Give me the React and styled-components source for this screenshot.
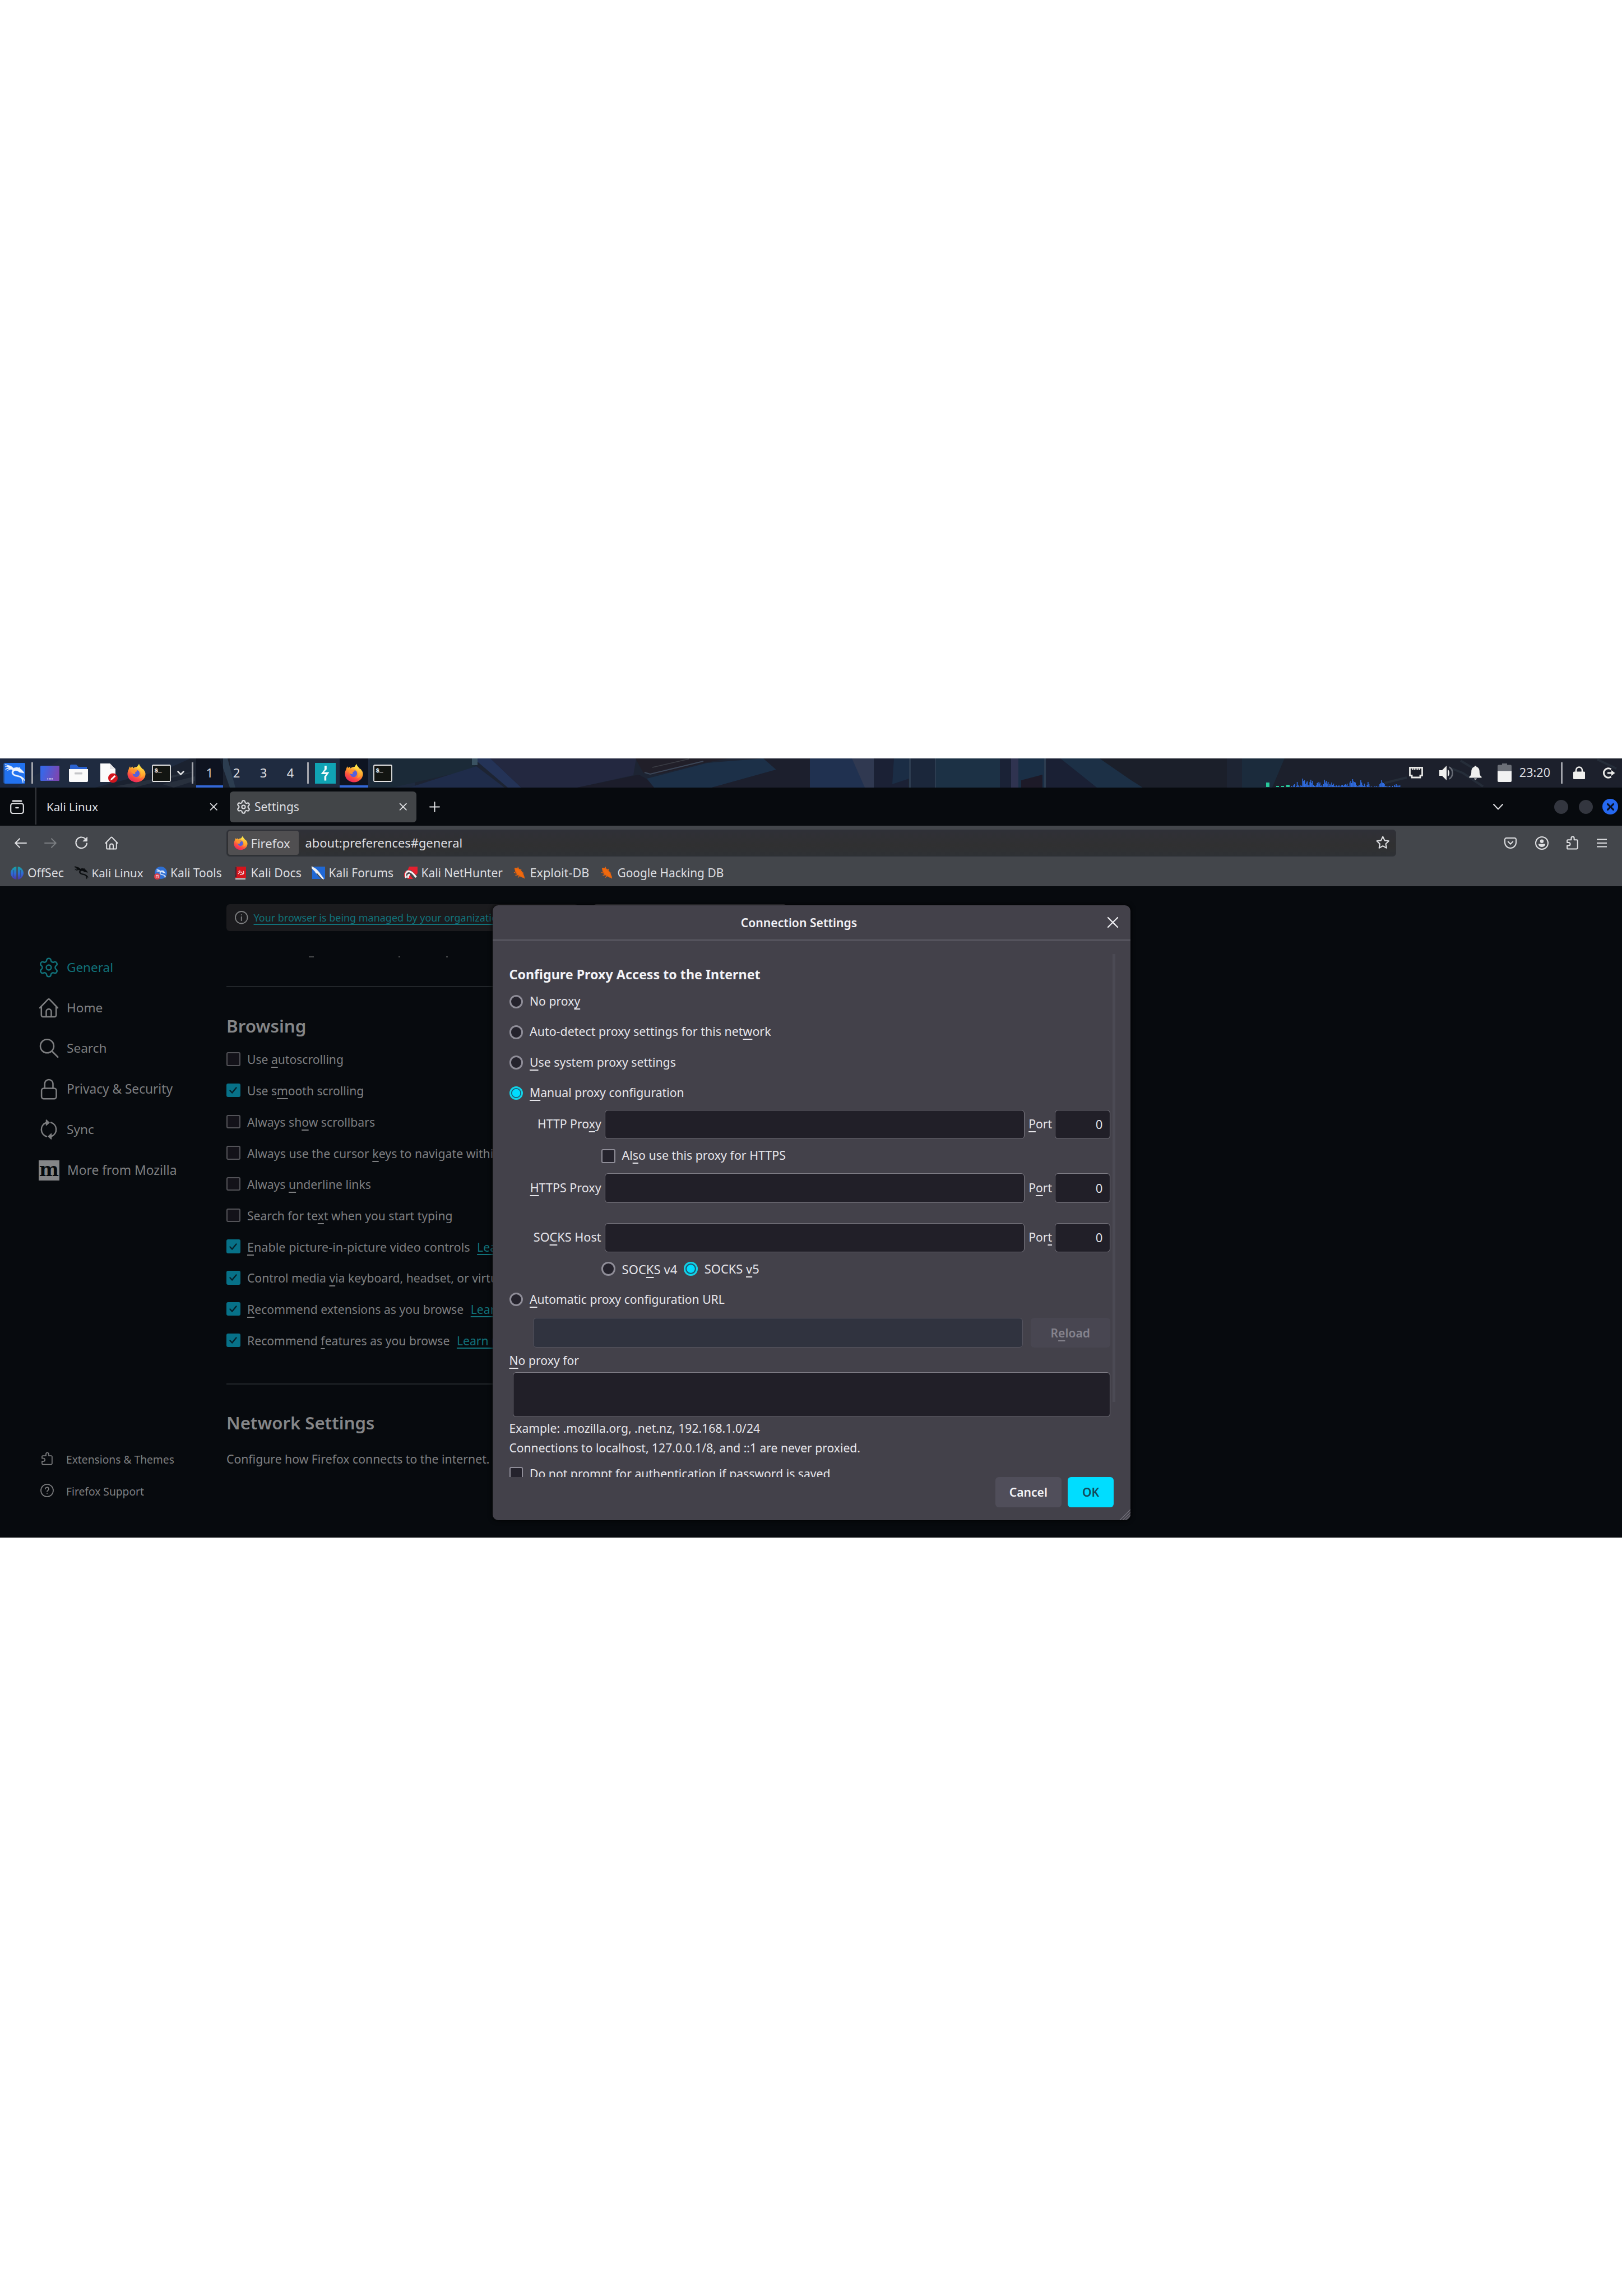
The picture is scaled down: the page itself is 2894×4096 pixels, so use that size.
import React from "react";
import styled, { createGlobalStyle } from "styled-components";

const Global = createGlobalStyle`
  html, body { margin: 0; padding: 0; background: #fff; }
  *, *::before, *::after { box-sizing: border-box; }
  body { font-family: "Noto Sans", "Open Sans", sans-serif; font-size: 21.2px; overflow: hidden; }
  svg { display: block; flex: none; overflow: visible; }
`;

const c = {
  frame: "#070a0e",
  toolbar: "#43464b",
  text: "#dedfe2",
  dimText: "#7e7f81",
  dimCyan: "#11727a",
  dialog: "#43414a",
  input: "#211f28",
  border: "#7c7a83",
  cyan: "#00ddff",
};

/* ---------- shared ---------- */
const Page = styled.main`
  width: 2894px;
  height: 4096px;
  padding-top: 1353px;
  background: #fff;
`;
const Screen = styled.div`
  width: 2894px;
  height: 1390px;
  background: ${c.frame};
  color: ${c.text};
  overflow: hidden;
`;
const Text = styled.span`
  font-size: ${(p) => p.$size || 21.2}px;
  font-weight: ${(p) => p.$weight || 400};
  line-height: 30px;
  white-space: nowrap;
  margin-top: ${(p) => p.$shift || 0}px;
`;
const Key = styled.span`
  text-decoration: underline;
  text-decoration-thickness: 1.6px;
  text-underline-offset: 4.5px;
  text-decoration-skip-ink: none;
`;
const Gap = styled.span`
  flex: none;
  width: ${(p) => p.$w}px;
`;

/* ---------- desktop panel ---------- */
const Panel = styled.header`
  position: relative;
  height: 52px;
  background: #1d2433;
`;
const Wallpaper = styled.svg`
  position: absolute;
  inset: 0;
`;
const PanelRow = styled.div`
  position: relative;
  height: 52px;
  display: flex;
  align-items: center;
`;
const Separator = styled.span`
  flex: none;
  width: 3px;
  height: 38px;
  background: #a3a5ac;
`;
const Workspace = styled.span`
  flex: none;
  display: flex;
  justify-content: center;
  align-items: center;
  width: 48px;
  height: 52px;
  padding-bottom: 2px;
  font-size: 22px;
  background: ${(p) => (p.$active ? "rgba(10,14,26,.72)" : "transparent")};
  box-shadow: ${(p) => (p.$active ? "inset 0 -4px #3367d6" : "none")};
`;
const Task = styled.span`
  flex: none;
  display: flex;
  justify-content: center;
  align-items: center;
  width: 51px;
  height: 52px;
  background: #0e1422;
  box-shadow: inset 0 -4px #3367d6;
`;
const Tray = styled.div`
  display: flex;
  align-items: center;
  height: 52px;
  margin-left: auto;
  padding: 0 12px 1px 0;
`;

/* ---------- browser chrome ---------- */
const TabStrip = styled.div`
  height: 68px;
  display: flex;
  align-items: center;
  padding-left: 17.5px;
`;
const TabDivider = styled.span`
  width: 2px;
  height: 66px;
  margin: 0 18px 2px 20.5px;
  background: #36383d;
`;
const IdleTab = styled.div`
  display: flex;
  align-items: center;
  justify-content: space-between;
  width: 304px;
`;
const ActiveTab = styled.div`
  display: flex;
  align-items: center;
  width: 332.5px;
  height: 55px;
  margin-left: 23px;
  padding: 0 0 0 12px;
  border-radius: 6px;
  background: #424548;
`;
const WindowDot = styled.span`
  width: ${(p) => p.$size}px;
  height: ${(p) => p.$size}px;
  border-radius: 50%;
  background: ${(p) => p.$bg};
  display: grid;
  place-items: center;
`;
const WindowControls = styled.div`
  display: flex;
  align-items: center;
  margin-left: auto;
  padding-right: 7px;
`;
const Toolbars = styled.div`
  height: 107.5px;
  background: ${c.toolbar};
`;
const NavBar = styled.div`
  height: 61px;
  display: flex;
  align-items: center;
`;
const UrlBar = styled.div`
  flex: none;
  display: flex;
  align-items: center;
  width: 2087px;
  height: 48px;
  padding: 0 11px 0 1.5px;
  border: 1px solid #2f3238;
  border-radius: 6px;
  background: linear-gradient(#2f3037, #303031 60%, #2e3135);
`;
const Identity = styled.div`
  flex: none;
  display: flex;
  align-items: center;
  width: 126px;
  height: 43px;
  padding-left: 10px;
  gap: 6px;
  border-radius: 4px;
  background: #504f51;
`;
const UrlStar = styled.div`
  margin-left: auto;
`;
const Bookmarks = styled.div`
  height: 46px;
  display: flex;
  align-items: center;
`;
const Bookmark = styled.div`
  display: flex;
  align-items: center;
  width: ${(p) => p.$w}px;
  gap: ${(p) => p.$gap}px;
`;

/* ---------- preferences page ---------- */
const Content = styled.div`
  position: relative;
  height: 1162.5px;
  display: flex;
  color: ${c.dimText};
`;
const Sidebar = styled.nav`
  width: 404px;
  padding: 109px 0 0 69px;
`;
const Category = styled.div`
  height: 72.4px;
  display: flex;
  align-items: center;
  gap: 14px;
  color: ${(p) => (p.$active ? c.dimCyan : c.dimText)};
`;
const SideFooter = styled.div`
  margin-top: 450px;
`;
const SideLink = styled.div`
  height: 57px;
  display: flex;
  align-items: center;
  gap: 22px;
  padding-left: 3px;
`;
const Main = styled.section`
  width: 1000px;
  padding-top: 32px;
`;
const TopRow = styled.div`
  display: flex;
  gap: 26px;
  height: 48px;
`;
const Notice = styled.div`
  display: flex;
  align-items: center;
  flex: none;
  width: 628px;
  padding-left: 15px;
  gap: 10px;
  border-radius: 6px;
  background: #1b1b1e;
`;
const SearchField = styled.div`
  flex: none;
  width: 346px;
  border: 1.5px solid #3b3b3f;
  border-radius: 6px;
`;
const Link = styled(Text)`
  color: ${c.dimCyan};
  text-decoration: underline;
  text-decoration-thickness: 1.5px;
  text-underline-offset: 4px;
  text-decoration-skip-ink: none;
`;
const Clipped = styled.div`
  display: flex;
  height: 2px;
  margin-top: 45px;
  padding-left: 147px;
`;
const Speck = styled.i`
  width: ${(p) => p.$w}px;
  height: 2px;
  margin-right: ${(p) => p.$mr}px;
  background: #4a4b4d;
`;
const Rule = styled.div`
  height: 2px;
  margin-top: ${(p) => p.$mt}px;
  background: #22262a;
`;
const SectionTitle = styled.h2`
  margin: ${(p) => p.$mt}px 0 0 0;
  font-size: ${(p) => p.$size}px;
  line-height: 44px;
  font-weight: 600;
  color: #858688;
`;
const SectionText = styled.p`
  margin: 25px 0 0;
  font-size: 21.23px;
  line-height: 35.3px;
  white-space: nowrap;
`;
const Options = styled.div`
  margin-top: 10px;
`;
const Option = styled.div`
  height: 55.73px;
  display: flex;
  align-items: center;
  gap: 12.5px;
`;
const DimBox = styled.span`
  flex: none;
  width: 24.5px;
  height: 24.5px;
  border-radius: 3px;
  border: ${(p) => (p.$on ? "none" : "2px solid #535358")};
  background: ${(p) => (p.$on ? "#077188" : "#131219")};
  display: grid;
  place-items: center;
`;

/* ---------- dialog ---------- */
const Dialog = styled.section`
  position: absolute;
  left: 879px;
  top: 34.5px;
  width: 1138px;
  height: 1096.5px;
  border-radius: 10px;
  background: ${c.dialog};
  color: #e6e5ea;
  overflow: hidden;
  box-shadow: 0 0 8px #000;
`;
const DialogHead = styled.div`
  display: flex;
  align-items: center;
  height: 63px;
  padding-right: 22px;
  border-bottom: 2px solid #5d5c66;
`;
const DialogTitle = styled.div`
  flex: 1;
  margin-right: 4px;
  text-align: center;
  font-size: 21.15px;
  line-height: 30px;
  font-weight: 600;
  color: #f3f3f7;
`;
const DialogBody = styled.div`
  display: flex;
  height: 957px;
  padding-left: 29.5px;
  overflow: hidden;
`;
const Form = styled.div`
  width: 1072.5px;
`;
const ScrollThumb = styled.div`
  width: 5px;
  height: 799px;
  margin: 24px 0 0 4px;
  background: #4b4a54;
`;
const FormTitle = styled.h3`
  margin: 43px 0 5px;
  font-size: 23.25px;
  line-height: 34px;
  font-weight: 700;
  color: #f3f3f7;
  white-space: nowrap;
`;
const ChoiceRow = styled.div`
  display: flex;
  align-items: center;
  height: ${(p) => p.$h || 54.3}px;
  padding-left: ${(p) => p.$indent || 0}px;
`;
const Radio = styled.span`
  flex: none;
  width: 24.5px;
  height: 24.5px;
  margin-right: 12px;
  border-radius: 50%;
  border: 3px solid ${(p) => (p.$on ? "#12d3e8" : "#8f8d98")};
  background: ${(p) => (p.$on ? `radial-gradient(circle, ${c.cyan} 0 6.8px, #1d5a74 7.6px)` : "#25232d")};
`;
const Check = styled.span`
  flex: none;
  width: 24.5px;
  height: 24.5px;
  margin-right: 12px;
  border-radius: 3px;
  border: 2.5px solid #8f8d98;
  background: #25232d;
`;
const FieldRow = styled.div`
  display: flex;
  align-items: center;
  height: ${(p) => p.$h}px;
  margin-top: ${(p) => p.$mt || 0}px;
`;
const FieldLabel = styled(Text)`
  width: 164.2px;
  margin-right: 6.3px;
  text-align: right;
`;
const Input = styled.div`
  flex: none;
  display: flex;
  align-items: center;
  justify-content: flex-end;
  width: ${(p) => p.$w}px;
  height: 100%;
  padding-right: 12.5px;
  border: 1.5px solid ${(p) => (p.$off ? "#565560" : c.border)};
  border-radius: 6px;
  background: ${(p) => (p.$off ? "#30333f" : c.input)};
`;
const PortLabel = styled(Text)`
  width: 41.8px;
  margin: -2px 5.5px 0 7.2px;
`;
const Button = styled.div`
  flex: none;
  display: flex;
  align-items: center;
  justify-content: center;
  width: ${(p) => p.$w}px;
  height: 53.5px;
  padding-bottom: 1px;
  border-radius: 6px;
  background: ${(p) => p.$bg};
  color: ${(p) => p.$fg};
  font-weight: 600;
  font-size: 21.1px;
`;
const Note = styled.p`
  margin: 0;
  line-height: 35.3px;
  white-space: nowrap;
  font-size: ${(p) => p.$size}px;
`;
const ExceptionsLabel = styled.p`
  margin: 7px 0 4.5px;
  font-size: 21.2px;
  line-height: 32px;
`;
const ExceptionsRow = styled.div`
  height: 80px;
  margin-bottom: 2.5px;
  padding-left: 6.7px;
`;
const DialogFoot = styled.div`
  display: flex;
  justify-content: flex-end;
  gap: 11.5px;
  padding-right: 30px;
`;
const Resizer = styled.svg`
  position: absolute;
  right: 0;
  bottom: 0;
`;

/* ---------- drawings ---------- */
const Ico = ({ s = 24, w, h, vb = "0 0 24 24", sw = 2, color = "currentColor", children }) => (
  <svg width={w || s} height={h || s} viewBox={vb} fill="none" stroke={color} strokeWidth={sw} strokeLinecap="round" strokeLinejoin="round">
    {children}
  </svg>
);
const Gear = ({ s, sw = 1.8 }) => (
  <Ico s={s} sw={sw} vb="1 1 22 22">
    <path d="M9.671 4.136a2.34 2.34 0 0 1 4.659 0 2.34 2.34 0 0 0 3.319 1.915 2.34 2.34 0 0 1 2.33 4.033 2.34 2.34 0 0 0 0 3.831 2.34 2.34 0 0 1-2.33 4.033 2.34 2.34 0 0 0-3.319 1.915 2.34 2.34 0 0 1-4.659 0 2.34 2.34 0 0 0-3.32-1.915 2.34 2.34 0 0 1-2.33-4.033 2.34 2.34 0 0 0 0-3.831A2.34 2.34 0 0 1 6.35 6.051a2.34 2.34 0 0 0 3.319-1.915" />
    <circle cx="12" cy="12" r="2.7" />
  </Ico>
);
const House = ({ s, sw = 1.9 }) => (
  <Ico s={s} sw={sw}>
    <path d="M1.4 12 10.9 2.1a1.6 1.6 0 0 1 2.2 0L22.6 12M3.2 10.5v10.200a1.900 1.900 0 0 0 1.900 1.900h13.800a1.900 1.900 0 0 0 1.900-1.900V10.500" />
    <path d="M9 22.400v-6a3 3 0 0 1 6 0v6" />
  </Ico>
);
const Puzzle = ({ s, sw = 1.8 }) => (
  <Ico s={s} sw={sw}>
    <path d="M4.500 22.500h14.600a1.800 1.800 0 0 0 1.800-1.800V8.800A1.800 1.800 0 0 0 19.100 7H15V4a2.500 2.500 0 0 0-5 0v3H4.500a1.500 1.500 0 0 0-1.500 1.500V11.500h2.600a2.600 2.600 0 0 1 0 5.300H3V21a1.500 1.500 0 0 0 1.500 1.500z" />
  </Ico>
);
const Cross = ({ s, sw = 2, color }) => (
  <Ico s={s} vb="0 0 12 12" sw={(sw * 12) / s} color={color}>
    <path d="M.6.6 11.400 11.400M11.400.6.6 11.400" />
  </Ico>
);
const Firefox = ({ w, h }) => (
  <svg width={w} height={h} viewBox="0 0 32 33">
    <defs>
      <linearGradient id="ffBody" x1=".8" y1=".1" x2=".3" y2="1">
        <stop offset="0" stopColor="#ffd94a" />
        <stop offset=".35" stopColor="#ff9a2b" />
        <stop offset=".7" stopColor="#fb4a45" />
        <stop offset="1" stopColor="#e8245e" />
      </linearGradient>
      <linearGradient id="ffFlame" x1=".5" y1="0" x2=".6" y2="1">
        <stop offset="0" stopColor="#fff04d" />
        <stop offset="1" stopColor="#ff9426" />
      </linearGradient>
    </defs>
    <path d="M2.600 10C2.900 7.800 4 6 5 5.100c0 1.200.4 2.100.9 2.700C7.100 6.600 8.600 5.800 10 5.400c-.6.900-.6 2 .1 3 2.600-2.400 7-3.400 10.400-1.600C25 8 31.600 11 31.600 18.500 31.400 26.500 24.400 32.600 16 32.600S.4 26.500.4 18.300c0-3 .9-5.900 2.200-8.300z" fill="url(#ffBody)" />
    <circle cx="15.400" cy="17.300" r="6.200" fill="#5560dc" />
    <path d="M6.500 11.500c2-1.800 6-1.600 7.500-.3 1.500.2 3.500.4 3.500 1.500-.6 1.500-2.900 1.300-3.600 2.700-.5 1.300.5 2.300-.4 2.700-2.300.8-6.500-.6-7-6.600z" fill="#ff8f2c" />
    <path d="M20.400.4c-.8 2.800-4.300 4.600-3.700 8.100 1.600-.2 5 1.300 6.300 4.500 1.700 4.400 1.200 9.500-2.400 12.400 6-1.200 9.800-6.100 9-11.400-.3-2.200-1.400-3.600-2.500-4.800.2 1 .2 1.500 0 2C26 7.500 21.500 5.500 20.400.4z" fill="url(#ffFlame)" />
  </svg>
);
const Dragon = ({ color, sw = 0 }) => (
  <path
    fill={color}
    stroke={color}
    strokeWidth={sw}
    d="M0 .5C5 3 9 2.500 12.500 5.500l2.500 2C18 6 21 5.500 24 7l1-1 .8 2c3 2 5.500 4.500 7.200 8l-4.500-1-3.500-.5c-3-2.500-6.500-4-9.500-1.700-1.800 1.500-1.200 4.200 1.500 5.500 4 2 9.500 1.500 12.500 4.500 3 1.500 4.200 4 4.500 6.500-1.500-2-2.500-3-3.500-3.500.8 2 1 4.500.5 7-1-4-1.500-7-4-9-3-2.200-8-1.500-12-4-3.500-2-4-6-1.500-9-1.500-1.500-4.500-1.800-9 1 1.500-2 3-3 4.500-3.400C6.500 8 4 8.500 1 10c1.500-2.200 4-3.300 6.500-3.500C5.500 5 3 4.500.5 4.500 2.500 3.600 4.500 3.500 6 3.800 4 2.800 2 1.800 0 .5z"
  />
);
const Terminal = () => (
  <svg width="34" height="31" viewBox="0 0 34 31">
    <rect x="1" y="1" width="32" height="29" rx="1.500" fill="#121512" stroke="#e4e4e4" strokeWidth="1.800" />
    <text x="4.500" y="13.500" fill="#f2f2f2" fontFamily="Liberation Mono, monospace" fontWeight="700" fontSize="11">$_</text>
  </svg>
);
const graph = [2,0,3,5,0,2,9,3,1,0,3,2,15,11,12,5,8,10,3,4,9,13,7,11,4,2,1,3,7,9,5,8,2,3,1,5,13,8,11,6,9,2,5,3,8,4,6,2,1,3,1,2,3,1,1,3,4,2,4,5,3,6,2,1,8,11,7,14,10,9,8,4,2,1,3,4,12,8,3,2,6,1,0,4,9,5,1,0,1,0,0,1,0,2,0,1,0,5,7,12,8,7,5,2,1,1,0,1,2,0,0,2,0,4,1,5,2,3,1,3];

const WallpaperArt = () => (
  <Wallpaper width="2894" height="52" viewBox="0 0 2894 52" preserveAspectRatio="none">
    <path d="M0 0H740V52H0z" fill="#1f2b40" />
    <path d="M0 0H110L30 52H0z" fill="#1b2740" />
    <path d="M170 52 300 18 340 0H410V52z" fill="#1b2230" />
    <path d="M205 50 330 26 348 24 240 52zM290 46 348 32V40L310 52z" fill="#28303d" />
    <path d="M392 0h14l14 52h-10z" fill="#2c3d50" />
    <path d="M660 0H842L850 18 700 52H660z" fill="#1b2a38" />
    <path d="M730 52 850 14 900 52z" fill="#1f2c4a" />
    <path d="M845 0h30l55 52h-24z" fill="#243357" />
    <path d="M875 0h260l-5 30-100 22H930z" fill="#232840" />
    <path d="M842 0h10v12h-10z" fill="#3a5262" />
    <path d="M1030 52 1140 29 1180 52z" fill="#1c1d2b" />
    <path d="M1134 0 1300 0 1255 8 1175 28 1148 26z" fill="#211f29" />
    <path d="m1150 25 10 3 95-23" fill="none" stroke="#3c4759" strokeWidth="2" />
    <path d="m1164 16 65-15" fill="none" stroke="#3b3d45" strokeWidth="1.500" />
    <path d="M1154 36 1262 8 1362 0 1385 20 1270 52H1167z" fill="#1c3048" />
    <path d="M1362 0h83v52H1270l115-32z" fill="#1c1f2d" />
    <path d="M1445 0h114v52H1445z" fill="#203150" />
    <path d="M1520 0h39v52h-16z" fill="#303951" />
    <path d="M1560 0h60v52h-60z" fill="#1b2135" />
    <path d="M1595 0h27v36l-30 10z" fill="#1b2d45" />
    <path d="M1622 0h3v52h-3zM1668 0h2v52h-2zM1863 0h3v52h-3z" fill="#2c3c50" />
    <path d="M1626 0h42v52h-42z" fill="#1b273b" />
    <path d="M1670 0h114v52h-114z" fill="#1c3145" />
    <path d="M1784 0h20v52h-20z" fill="#1a2236" />
    <path d="M1804 0h13v52h-13z" fill="#2f3350" />
    <path d="M1817 0h46v52h-46z" fill="#1a2f46" />
    <path d="M1822 39 1860 29V52H1822z" fill="#1d1a28" />
    <path d="M1867 0h28l62 52h-90z" fill="#1a2034" />
    <path d="M1892 0h70l55 38 22 14h-82z" fill="#1c3046" />
    <path d="M1962 0h227v52h-150l-22-14z" fill="#1b1f2a" />
    <path d="M2216 0h76l-22 52h-54z" fill="#1b2b3c" />
    <path d="M2292 0h602v52h-624z" fill="#1c202c" />
    <path d="m2590 18 20 8 36 24M2606 4l30 18M2470 44l40-10M2850 2l34 16" fill="none" stroke="#252d39" strokeWidth="4" />
  </Wallpaper>
);

const Net = () => (
  <svg width="25" height="21" viewBox="0 0 25 21">
    <path d="M1.500 1.500h22v14h-3.500v3.500H5v-3.500H1.500z" fill="#191c26" stroke="#e8e8e6" strokeWidth="2.800" />
    <path d="M6.500 2v4M9.500 2v4M12.500 2v4M15.500 2v4M18.500 2v4" stroke="#e8e8e6" strokeWidth="1.600" />
  </svg>
);
const Volume = () => (
  <svg width="26" height="26" viewBox="0 0 26 26">
    <path d="M0 8h5l8-8v26l-8-8H0z" fill="#f0f0ee" />
    <path d="M15 6.500c4 2.500 4 10.500 0 13z" fill="#f0f0ee" />
    <path d="M17.500 2.500c8 4 8 17 0 21" fill="none" stroke="#666b75" strokeWidth="2.600" />
  </svg>
);
const Bell = () => (
  <svg width="23" height="25" viewBox="0 0 23 25" fill="#f0f0ee">
    <path d="M11.500 0c1.200 0 1.800.8 1.900 2 3.800 1 5.400 4.500 5.400 8.500 0 5 1.200 7.500 3.700 9.300V21.500H.5v-1.700C3 18 4.200 15.500 4.200 10.500c0-4 1.600-7.500 5.400-8.500.1-1.200.7-2 1.900-2z" />
    <path d="M9 22.800h5c-.4 1.400-1.300 2-2.500 2s-2.100-.6-2.500-2z" />
  </svg>
);
const Battery = () => (
  <svg width="25" height="33" viewBox="0 0 25 33">
    <path d="M8 0h9v2.500h6a2 2 0 0 1 2 2V14H0V4.500a2 2 0 0 1 2-2h6z" fill="#6b6f77" />
    <path d="M0 13.500h25V31a2 2 0 0 1-2 2H2a2 2 0 0 1-2-2z" fill="#f2f2f2" />
  </svg>
);
const PadLock = () => (
  <svg width="21" height="23" viewBox="0 0 21 23">
    <path d="M5 11V7a5.500 5.500 0 0 1 11 0v4" fill="none" stroke="#f0f0ee" strokeWidth="2.600" />
    <rect y="9.500" width="21" height="13.500" rx="1.500" fill="#f0f0ee" />
  </svg>
);
const Logout = () => (
  <svg width="23" height="20" viewBox="0 0 23 20">
    <path d="M15.500 3.200a8.300 8.300 0 1 0 0 13.600" fill="none" stroke="#ececea" strokeWidth="3" />
    <path d="M9 8.600h7V5l6.500 5L16 15v-3.600H9z" fill="#ececea" />
  </svg>
);
const Bug = () => (
  <svg width="21" height="23" viewBox="0 0 21 23">
    <path d="M3 3 8 3.500l4 2.500 4 5 3 8-3.500-.5-8-4.500-3.500-6z" fill="#f06a0e" stroke="#e8650f" strokeWidth="2" strokeLinejoin="round" />
    <path d="M1 10l4 2M3.500 15.500l5-1M8 19.500l3-3M8 .5l1 4M14 4l-2 4M18.500 11l-3 1M20 21l-3-3" stroke="#e8650f" strokeWidth="1.300" />
  </svg>
);

/* ---------- parts ---------- */
function DesktopPanel() {
  return (
    <Panel>
      <WallpaperArt />
      <PanelRow>
        <Gap $w={6} />
        <svg width="40" height="39" viewBox="0 0 40 39">
          <rect x="0" y="1" width="39" height="37" rx="3" fill="#2f86ff" opacity=".45" />
          <rect x="2" y="1" width="37" height="37" rx="2" fill="#2272f0" />
          <g transform="translate(2.500 2.500) scale(1.05)"><Dragon color="#eef4ff" sw={0.5} /></g>
        </svg>
        <Gap $w={10} />
        <Separator />
        <Gap $w={13} />
        <svg width="34" height="27" viewBox="0 0 34 27">
          <defs><linearGradient id="desk" x2="1" y2=".25"><stop offset=".2" stopColor="#3a66e6" /><stop offset="1" stopColor="#7a48b4" /></linearGradient></defs>
          <rect width="34" height="27" rx="1.500" fill="url(#desk)" />
          <path d="M12.500 23.500h9.500" stroke="#fff" strokeWidth="2.200" strokeDasharray="1.600 1" />
        </svg>
        <Gap $w={17} />
        <svg width="34" height="31" viewBox="0 0 34 31">
          <path d="M2 10V2a2 2 0 0 1 2-2h9l4 4h15v6z" fill="#2b62cf" />
          <path d="M0 8h34v21a2 2 0 0 1-2 2H2a2 2 0 0 1-2-2z" fill="#fafafa" />
          <rect x="10" y="14" width="14" height="3.500" rx="1" fill="#c4c5c8" />
        </svg>
        <Gap $w={22} />
        <svg width="31" height="35" viewBox="0 0 31 35">
          <path d="M0 0h17l10 10v23H0z" fill="#fbfbfb" />
          <path d="M17 0v10h10" fill="#e3e3e6" />
          <circle cx="22.500" cy="26" r="8.500" fill="#d3151d" />
          <path d="m18 30.500 1-3.500 6.500-6 2 2-6.500 6z" fill="#fff" />
        </svg>
        <Gap $w={17} />
        <Firefox w={33} h={34} />
        <Gap $w={11} />
        <Terminal />
        <Gap $w={11} />
        <Ico w={13} h={8} vb="0 0 13 8" sw={2.6}><path d="M1.500 1.500 6.500 6.500 11.500 1.500" /></Ico>
        <Gap $w={13} />
        <Separator />
        <Gap $w={5} />
        <Workspace $active>1</Workspace>
        <Workspace>2</Workspace>
        <Workspace>3</Workspace>
        <Workspace>4</Workspace>
        <Gap $w={6} />
        <Separator />
        <Gap $w={11} />
        <svg width="37" height="37" viewBox="0 0 37 37">
          <rect width="37" height="37" fill="#10a3b4" />
          <path d="M17 5h3.800v6.500L16 16.500h9.500L20.200 24v7.500h-3.600V24l3.400-4h-9.500l6.500-8.500z" fill="#f4fbfb" />
        </svg>
        <Gap $w={7} />
        <Task><Firefox w={33} h={34} /></Task>
        <Gap $w={9} />
        <Terminal />
        <Tray>
          <svg width="240" height="52" viewBox="0 0 240 52">
            <path d="M0 43h6v8H0zM18 49h5v2h-5zM27 49h5v2h-5zM36 47h6v4h-6z" fill="#27c99a" />
            {graph.map((v, i) => (
              <rect key={i} x={45 + i * 1.62} y={51 - v} width="1.620" height={v} fill="#2f6ce0" />
            ))}
          </svg>
          <Gap $w={15} /><Net /><Gap $w={29} /><Volume /><Gap $w={27} /><Bell /><Gap $w={28} /><Battery />
          <Gap $w={14} />
          <Text $size={21.6} $shift={-1}>23:20</Text>
          <Gap $w={19} /><Separator /><Gap $w={19} /><PadLock /><Gap $w={31} /><Logout />
        </Tray>
      </PanelRow>
    </Panel>
  );
}

function Chrome() {
  return (
    <>
      <TabStrip>
        <Ico w={25} h={25} sw={2.2} vb="0 0 25 25">
          <path d="M5 2h15" strokeWidth="3" />
          <rect x="1.200" y="6.500" width="22.600" height="17.500" rx="3.500" />
          <path d="M10.500 14h4" strokeWidth="2.600" />
        </Ico>
        <TabDivider />
        <IdleTab>
          <Text $size={20.45}>Kali Linux</Text>
          <Cross s={12.5} sw={1.8} />
        </IdleTab>
        <ActiveTab>
          <Gear s={25} />
          <Gap $w={7} />
          <Text $size={21}>Settings</Text>
          <Gap $w={179} />
          <Cross s={12.5} sw={1.8} />
        </ActiveTab>
        <Gap $w={23} />
        <Ico s={19} vb="0 0 19 19" sw={2}><path d="M9.500 1v17M1 9.500h17" /></Ico>
        <WindowControls>
          <Ico w={18} h={11} vb="0 0 18 11" sw={2}><path d="M1 1 9 9.500 17 1" /></Ico>
          <Gap $w={91} />
          <WindowDot $size={25} $bg="#33363f" />
          <Gap $w={19} />
          <WindowDot $size={25} $bg="#33363f" />
          <Gap $w={17} />
          <WindowDot $size={28} $bg="#2668f0"><Cross s={11} sw={3.2} color="#0a1020" /></WindowDot>
        </WindowControls>
      </TabStrip>
      <Toolbars>
        <NavBar>
          <Gap $w={25.5} />
          <Ico w={22} h={18} vb="0 0 22 18"><path d="M21 9H1.500M9 1.200 1.200 9 9 16.800" /></Ico>
          <Gap $w={31.5} />
          <Ico w={22} h={18} vb="0 0 22 18" color="#7b7e82"><path d="M1 9h19.500M13 1.200 20.800 9 13 16.800" /></Ico>
          <Gap $w={33} />
          <Ico s={23} vb="0 0 23 23" sw={2.2}>
            <path d="M21 12.500A9.800 9.800 0 1 1 17.800 4" />
            <path d="M21.500 1.500v7.200h-7.200z" fill="currentColor" strokeWidth="1" />
          </Ico>
          <Gap $w={29.5} />
          <House s={24} sw={2} />
          <Gap $w={193.5} />
          <UrlBar>
            <Identity>
              <Firefox w={25} h={25.5} />
              <Text $size={22}>Firefox</Text>
            </Identity>
            <Gap $w={12} />
            <Text $size={21.88}>about:preferences#general</Text>
            <UrlStar>
              <Ico s={24.5} sw={2}><path d="m12 1.500 3.200 6.700 7.300.9-5.400 5 1.400 7.300-6.500-3.600-6.500 3.600 1.400-7.300-5.400-5 7.300-.9z" /></Ico>
            </UrlStar>
          </UrlBar>
          <Gap $w={193} />
          <Ico w={22} h={20} vb="0 0 22 20">
            <path d="M3.500 1h15A2.500 2.500 0 0 1 21 3.500V9a10 10 0 0 1-20 0V3.500A2.500 2.500 0 0 1 3.500 1z" />
            <path d="m6.800 7.500 4.200 4.200 4.200-4.200" />
          </Ico>
          <Gap $w={32.5} />
          <Ico s={24}>
            <circle cx="12" cy="12" r="11" />
            <circle cx="12" cy="8.700" r="3.200" fill="currentColor" stroke="none" />
            <path d="M5.800 13.600h12.400c0 3-2.400 5.400-6.200 5.400s-6.200-2.400-6.200-5.400z" fill="currentColor" stroke="none" />
          </Ico>
          <Gap $w={30} />
          <Puzzle s={25} sw={2} />
          <Gap $w={31} />
          <Ico w={18} h={16} vb="0 0 18 16"><path d="M0 1.500h18M0 8h18M0 14.500h18" strokeLinecap="butt" /></Ico>
        </NavBar>
        <Bookmarks>
          <Gap $w={18.5} />
          <Bookmark $w={114} $gap={7.5}>
            <svg width="23" height="23" viewBox="0 0 23 23">
              <defs><linearGradient id="off" x2="0" y2="1"><stop offset="0" stopColor="#15a5a0" /><stop offset=".55" stopColor="#3168d8" /><stop offset="1" stopColor="#4a34a8" /></linearGradient></defs>
              <path d="M10.300 0v23C3 22 0 16 0 11.500S3 1 10.300 0zM12.700 0v23c7.300-1 10.300-7 10.300-11.500S20 1 12.700 0z" fill="url(#off)" />
              <path d="M5.500 6v12M17.500 6v12" stroke="#2b4f92" strokeWidth="1.200" />
            </svg>
            <Text $size={21.2}>OffSec</Text>
          </Bookmark>
          <Bookmark $w={142} $gap={7}>
            <svg width="24" height="24" viewBox="0 0 34 34"><Dragon color="#0a0c0f" sw={0.9} /></svg>
            <Text $size={20.45}>Kali Linux</Text>
          </Bookmark>
          <Bookmark $w={145.5} $gap={7.5}>
            <svg width="22" height="23" viewBox="0 0 22 23">
              <circle cx="12" cy="11" r="11" fill="#2f6fd2" />
              <g transform="translate(4 4) scale(.5)"><Dragon color="#dbe6f8" sw={1} /></g>
              <circle cx="5.500" cy="17.500" r="5.500" fill="#dc3c46" />
              <path d="M3.600 20v-4.500h3.600V20" fill="none" stroke="#f2c6cb" strokeWidth="1.400" />
            </svg>
            <Text $size={20.9}>Kali Tools</Text>
          </Bookmark>
          <Bookmark $w={135.5} $gap={8.5}>
            <svg width="19" height="23" viewBox="0 0 19 23">
              <path d="M1 0h18v20H0V2z" fill="#d4141c" />
              <path d="M0 1h2v18H0z" fill="#49202e" />
              <path d="M0 21h18v2H0z" fill="#e3d6d8" />
              <path d="M5 13c2-3 3-4 5-3.500s1 3 3 2.500 2.500-2 1-4M8 14c3 1 6-.5 7-2M5.500 9l3-2" fill="none" stroke="#f3d7d9" strokeWidth="1.400" />
            </svg>
            <Text $size={21.3}>Kali Docs</Text>
          </Bookmark>
          <Bookmark $w={165} $gap={7}>
            <svg width="24" height="24" viewBox="0 0 24 24">
              <path d="M1 1h23v22H1z" fill="#2068d4" />
              <path d="M0 0c4 3 8 4 11 8 4 4 6 8 10 13l1 3-5-2c-4-5-9-7-11-12L0 4z" fill="#eef0f3" />
              <path d="M9 13c3 4 6 7 9 10" stroke="#40444b" strokeWidth="1.600" fill="none" />
            </svg>
            <Text $size={20.9}>Kali Forums</Text>
          </Bookmark>
          <Bookmark $w={195} $gap={7}>
            <svg width="24" height="24" viewBox="0 0 24 24">
              <path d="M9 1h15v12l-3 3-9-9-6 1zM6 23l4-8 6 8z" fill="#e3202f" />
              <path d="M4 21C.5 16 2 10.500 7 9.500 12 8.500 16 13 21.500 20M7.500 21c-1.500-4 .5-6 3-5.500" fill="none" stroke="#f6f0f1" strokeWidth="3.400" />
              <path d="M1 20c-1-5 0-9 3-11" fill="none" stroke="#e3202f" strokeWidth="1.500" />
            </svg>
            <Text $size={20.9}>Kali NetHunter</Text>
          </Bookmark>
          <Bookmark $w={156} $gap={9}><Bug /><Text $size={21.66}>Exploit-DB</Text></Bookmark>
          <Bookmark $w={230} $gap={9}><Bug /><Text $size={20.9}>Google Hacking DB</Text></Bookmark>
        </Bookmarks>
      </Toolbars>
    </>
  );
}

const Tick = () => (
  <svg width="16" height="16" viewBox="0 0 16 16" fill="none" stroke="#06202a" strokeWidth="2.400" strokeLinecap="round" strokeLinejoin="round">
    <path d="m2.500 8.500 3.600 4L13.500 3.500" />
  </svg>
);

const options = [
  { label: <>Use <Key>a</Key>utoscrolling</>, size: 21.12 },
  { label: <>Use s<Key>m</Key>ooth scrolling</>, size: 21.12, on: true },
  { label: <>Always sh<Key>o</Key>w scrollbars</>, size: 21.2 },
  { label: <>Always use the cursor <Key>k</Key>eys to navigate within</>, size: 21.3 },
  { label: <>Always <Key>u</Key>nderline links</>, size: 21.2 },
  { label: <>Search for te<Key>x</Key>t when you start typing</>, size: 21.13 },
  { label: <><Key>E</Key>nable picture-in-picture video controls</>, size: 21.61, on: true, more: true },
  { label: <>Control media <Key>v</Key>ia keyboard, headset, or virtual</>, size: 21.15, on: true },
  { label: <><Key>R</Key>ecommend extensions as you browse</>, size: 21.2, on: true, more: true },
  { label: <>Recommend <Key>f</Key>eatures as you browse</>, size: 21.2, on: true, more: true },
];

function Preferences() {
  return (
    <>
      <Sidebar>
        <Category $active><Gear s={36} sw={1.5} /><Text $size={22.5}>General</Text></Category>
        <Category><House s={36} sw={1.7} /><Text $size={22.6}>Home</Text></Category>
        <Category>
          <Ico s={36} sw={1.7}><circle cx="10" cy="9.500" r="8" /><path d="m15.800 15.500 7 7" /></Ico>
          <Text $size={22.6}>Search</Text>
        </Category>
        <Category>
          <Ico s={36} sw={1.7}><rect x="3.400" y="11" width="17.600" height="12.500" rx="2.600" /><path d="M7.200 11V5.500a4.900 4.900 0 0 1 9.800 0V11" /></Ico>
          <Text $size={22.66}>Privacy &amp; Security</Text>
        </Category>
        <Category>
          <Ico s={36} sw={1.7}>
            <path d="M9.300 20.300A8.700 8.700 0 0 1 8.500 4M14.700 3.700a8.700 8.700 0 0 1 .8 16.300" />
            <path d="M9 .6v6.400l3.600-3.200zM15 17v6.400l-3.600-3.200z" fill="currentColor" strokeWidth="1" />
          </Ico>
          <Text $size={22.6}>Sync</Text>
        </Category>
        <Category>
          <svg width="37" height="36" viewBox="0 0 37 36">
            <rect width="37" height="36" fill="#858688" />
            <text x="18.500" y="27.500" textAnchor="middle" fontFamily="DejaVu Serif, serif" fontWeight="700" fontSize="33" fill={c.frame}>m</text>
          </svg>
          <Text $size={22.8}>More from Mozilla</Text>
        </Category>
        <SideFooter>
          <SideLink><Puzzle s={24} sw={1.7} /><Text $size={19.23} $shift={3}>Extensions &amp; Themes</Text></SideLink>
          <SideLink>
            <Ico s={24} sw={1.7}><circle cx="12" cy="12" r="11" /><path d="M9 9.200a3 3 0 1 1 4.300 2.700c-.9.500-1.300 1-1.300 2.100M12 17.500v.1" /></Ico>
            <Text $size={19.23} $shift={3}>Firefox Support</Text>
          </SideLink>
        </SideFooter>
      </Sidebar>
      <Main>
        <TopRow>
          <Notice>
            <Ico s={23.5} sw={1.9}><circle cx="12" cy="12" r="11" /><path d="M12 11v6.500M12 7v.1" /></Ico>
            <Link $size={17.97}>Your browser is being managed by your organization.</Link>
          </Notice>
          <SearchField />
        </TopRow>
        <Clipped><Speck $w={9} $mr={151} /><Speck $w={3} $mr={82} /><Speck $w={3} $mr={0} /></Clipped>
        <Rule $mt={51} />
        <SectionTitle $mt={47} $size={31.4}>Browsing</SectionTitle>
        <Options>
          {options.map((o, i) => (
            <Option key={i}>
              <DimBox $on={o.on}>{o.on && <Tick />}</DimBox>
              <Text $size={o.size} $shift={2}>{o.label}</Text>
              {o.more && <Link $shift={2}>Learn more</Link>}
            </Option>
          ))}
        </Options>
        <Rule $mt={49} />
        <SectionTitle $mt={46.5} $size={31.1}>Network Settings</SectionTitle>
        <SectionText>Configure how Firefox connects to the internet.</SectionText>
      </Main>
    </>
  );
}

const ProxyRow = ({ label, size, port, h, mt }) => (
  <FieldRow $h={h} $mt={mt}>
    <FieldLabel $size={size} $shift={-2}>{label}</FieldLabel>
    <Input $w={749} />
    <PortLabel $size={21.1}>{port}</PortLabel>
    <Input $w={98.3}><Text $size={22} $shift={-2}>0</Text></Input>
  </FieldRow>
);

function ConnectionDialog() {
  return (
    <Dialog>
      <DialogHead>
        <DialogTitle>Connection Settings</DialogTitle>
        <Cross s={19} sw={2.2} color="#f0f0f4" />
      </DialogHead>
      <DialogBody>
        <Form>
          <FormTitle>Configure Proxy Access to the Internet</FormTitle>
          <ChoiceRow><Radio /><Text $shift={-2} $size={21.2}>No prox<Key>y</Key></Text></ChoiceRow>
          <ChoiceRow><Radio /><Text $shift={-2} $size={21.41}>Auto-detect proxy settings for this net<Key>w</Key>ork</Text></ChoiceRow>
          <ChoiceRow><Radio /><Text $shift={-2} $size={21.3}><Key>U</Key>se system proxy settings</Text></ChoiceRow>
          <ChoiceRow><Radio $on /><Text $shift={-2} $size={21.2}><Key>M</Key>anual proxy configuration</Text></ChoiceRow>
          <ProxyRow label={<>HTTP Pro<Key>x</Key>y</>} size={21.2} port={<><Key>P</Key>ort</>} h={51.5} mt={3} />
          <ChoiceRow $h={61.5} $indent={164.5}><Check /><Text $shift={-2} $size={21.38}>Al<Key>s</Key>o use this proxy for HTTPS</Text></ChoiceRow>
          <ProxyRow label={<><Key>H</Key>TTPS Proxy</>} size={21.5} port={<>P<Key>o</Key>rt</>} h={53} />
          <ProxyRow label={<>SO<Key>C</Key>KS Host</>} size={21.7} port={<>Por<Key>t</Key></>} h={51.5} mt={36} />
          <ChoiceRow $h={60} $indent={164.5}>
            <Radio /><Text $size={22.1}>SOC<Key>K</Key>S v4</Text>
            <Gap $w={12} />
            <Radio $on /><Text $size={21.9}>SOCKS <Key>v</Key>5</Text>
          </ChoiceRow>
          <ChoiceRow $h={49}><Radio /><Text $size={21.17}><Key>A</Key>utomatic proxy configuration URL</Text></ChoiceRow>
          <FieldRow $h={53} $mt={8.5}>
            <Gap $w={42.5} />
            <Input $off $w={874} />
            <Gap $w={13.5} />
            <Button $w={142.5} $bg="#484651" $fg="#85838d">R<Key>e</Key>load</Button>
          </FieldRow>
          <ExceptionsLabel><Key>N</Key>o proxy for</ExceptionsLabel>
          <ExceptionsRow><Input $w={1065.8} /></ExceptionsRow>
          <Note $size={21.17}>Example: .mozilla.org, .net.nz, 192.168.1.0/24</Note>
          <Note $size={21.08}>Connections to localhost, 127.0.0.1/8, and ::1 are never proxied.</Note>
          <ChoiceRow $h={56}><Check /><Text $size={21.2}>Do not prompt for authentication if password is saved</Text></ChoiceRow>
        </Form>
        <ScrollThumb />
      </DialogBody>
      <DialogFoot>
        <Button $w={117.3} $bg="#504e5a" $fg="#f3f3f7">Cancel</Button>
        <Button $w={82} $bg={c.cyan} $fg="#12495a">OK</Button>
      </DialogFoot>
      <Resizer width="20" height="20" viewBox="0 0 20 20" fill="none" stroke="#74727c" strokeWidth="1.200">
        <path d="M1 20 20 1M6 20 20 6M11 20l9-9M16 20l4-4" />
      </Resizer>
    </Dialog>
  );
}

export default function App() {
  return (
    <Page>
      <Global />
      <Screen>
        <DesktopPanel />
        <Chrome />
        <Content>
          <Preferences />
          <ConnectionDialog />
        </Content>
      </Screen>
    </Page>
  );
}
